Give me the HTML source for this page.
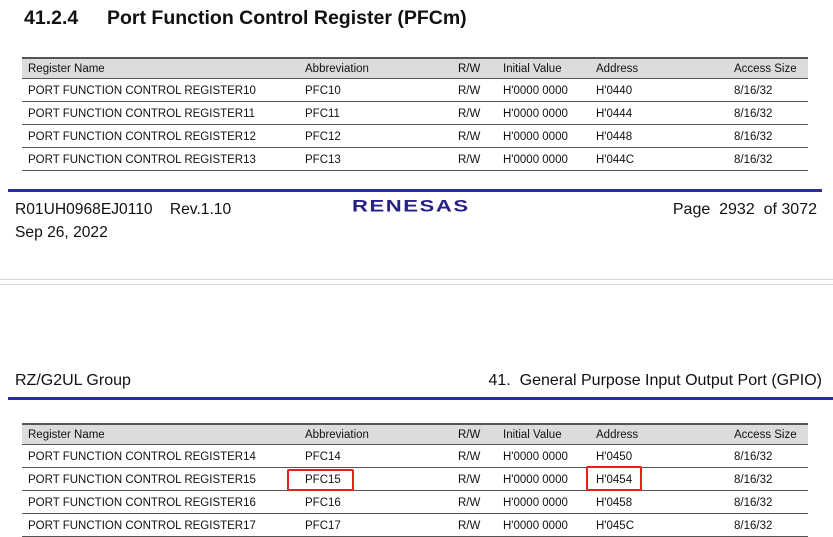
<!DOCTYPE html>
<html><head><meta charset="utf-8"><style>
body{margin:0;width:833px;height:531px;overflow:hidden;background:#fff;font-family:"Liberation Sans",Arial,sans-serif;color:#111;position:relative}
.a{position:absolute;white-space:nowrap}
.row{position:absolute;left:22px;width:786px;height:22px;border-bottom:1px solid #555}
.row span{position:absolute;top:6px;font-size:11.5px;white-space:nowrap}
.hd{background:#dcdcdc;border-top:2px solid #555;height:19px}
.hd span{top:4px}
.c1{left:6px}.c2{left:283px}.c3{left:436px}.c4{left:481px}.c5{left:574px}.c6{left:712px}
.red{position:absolute;border:2.5px solid #e8201c;border-radius:2px}
</style></head><body>
<div class="a" style="left:24px;top:7px;font-size:19.5px;font-weight:bold">41.2.4</div>
<div class="a" style="left:107px;top:7px;font-size:19.5px;font-weight:bold">Port Function Control Register (PFCm)</div>

<div class="row hd" style="top:57px"><span class="c1">Register Name</span><span class="c2">Abbreviation</span><span class="c3">R/W</span><span class="c4">Initial Value</span><span class="c5">Address</span><span class="c6">Access Size</span></div>
<div class="row" style="top:79px"><span class="c1">PORT FUNCTION CONTROL REGISTER10</span><span class="c2">PFC10</span><span class="c3">R/W</span><span class="c4">H'0000 0000</span><span class="c5">H'0440</span><span class="c6">8/16/32</span></div>
<div class="row" style="top:102px"><span class="c1">PORT FUNCTION CONTROL REGISTER11</span><span class="c2">PFC11</span><span class="c3">R/W</span><span class="c4">H'0000 0000</span><span class="c5">H'0444</span><span class="c6">8/16/32</span></div>
<div class="row" style="top:125px"><span class="c1">PORT FUNCTION CONTROL REGISTER12</span><span class="c2">PFC12</span><span class="c3">R/W</span><span class="c4">H'0000 0000</span><span class="c5">H'0448</span><span class="c6">8/16/32</span></div>
<div class="row" style="top:148px"><span class="c1">PORT FUNCTION CONTROL REGISTER13</span><span class="c2">PFC13</span><span class="c3">R/W</span><span class="c4">H'0000 0000</span><span class="c5">H'044C</span><span class="c6">8/16/32</span></div>

<div class="a" style="left:8px;top:189px;width:814px;height:3px;background:#2b2b9a"></div>
<div class="a" style="left:15px;top:201px;font-size:15.6px">R01UH0968EJ0110&nbsp;&nbsp;&nbsp; Rev.1.10</div>
<div class="a" style="left:15px;top:224px;font-size:15.6px">Sep 26, 2022</div>
<div class="a" style="left:352px;top:197px;font-size:21px;font-weight:bold;color:#26208a;letter-spacing:1.5px;transform:scale(1.05,0.8);transform-origin:left top">RENESAS</div>
<div class="a" style="right:16px;top:201px;font-size:16px">Page&nbsp; 2932&nbsp; of 3072</div>

<div class="a" style="left:0;top:279px;width:833px;height:1px;background:#d8d8d8"></div>
<div class="a" style="left:0;top:284px;width:833px;height:1px;background:#d8d8d8"></div>

<div class="a" style="left:15px;top:372px;font-size:16px">RZ/G2UL Group</div>
<div class="a" style="right:11px;top:372px;font-size:16px">41.&nbsp; General Purpose Input Output Port (GPIO)</div>
<div class="a" style="left:8px;top:397px;width:825px;height:3px;background:#2b2b9a"></div>

<div class="row hd" style="top:423px"><span class="c1">Register Name</span><span class="c2">Abbreviation</span><span class="c3">R/W</span><span class="c4">Initial Value</span><span class="c5">Address</span><span class="c6">Access Size</span></div>
<div class="row" style="top:445px"><span class="c1">PORT FUNCTION CONTROL REGISTER14</span><span class="c2">PFC14</span><span class="c3">R/W</span><span class="c4">H'0000 0000</span><span class="c5">H'0450</span><span class="c6">8/16/32</span></div>
<div class="row" style="top:468px"><span class="c1">PORT FUNCTION CONTROL REGISTER15</span><span class="c2">PFC15</span><span class="c3">R/W</span><span class="c4">H'0000 0000</span><span class="c5">H'0454</span><span class="c6">8/16/32</span></div>
<div class="row" style="top:491px"><span class="c1">PORT FUNCTION CONTROL REGISTER16</span><span class="c2">PFC16</span><span class="c3">R/W</span><span class="c4">H'0000 0000</span><span class="c5">H'0458</span><span class="c6">8/16/32</span></div>
<div class="row" style="top:514px"><span class="c1">PORT FUNCTION CONTROL REGISTER17</span><span class="c2">PFC17</span><span class="c3">R/W</span><span class="c4">H'0000 0000</span><span class="c5">H'045C</span><span class="c6">8/16/32</span></div>

<div class="red" style="left:287px;top:469px;width:63px;height:18px"></div>
<div class="red" style="left:586px;top:466px;width:52px;height:21px"></div>
</body></html>
